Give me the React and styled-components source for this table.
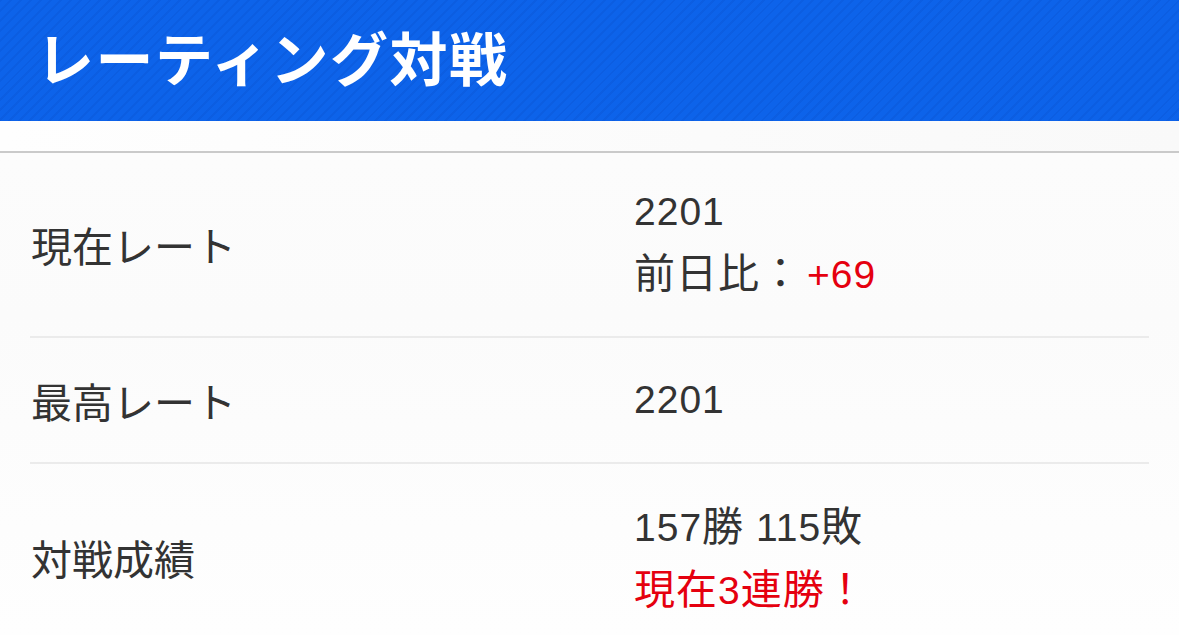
import React from "react";
import styled, { createGlobalStyle } from "styled-components";

const Global = createGlobalStyle`
  html, body { margin: 0; padding: 0; background: #fdfdfd; }
  body { font-family: "Liberation Sans", "Noto Sans CJK JP", sans-serif; color: #333; }
`;

const Page = styled.div`
  width: 1179px;
  height: 635px;
  overflow: hidden;
  background: linear-gradient(180deg, #fdfdfd 0%, #fbfbfb 50%, #fefefe 100%);
`;

const Header = styled.header`
  height: 121px;
  box-sizing: border-box;
  display: flex;
  align-items: center;
  padding: 0 0 9px 36px;
  background-color: #0d63ea;
  background-image: repeating-linear-gradient(
    135deg,
    rgba(0, 40, 140, 0.09) 0px,
    rgba(0, 40, 140, 0.09) 2px,
    rgba(255, 255, 255, 0) 2px,
    rgba(255, 255, 255, 0) 7px
  );
`;

const Title = styled.h1`
  margin: 0;
  font-family: "Noto Sans CJK JP", sans-serif;
  font-weight: 700;
  font-size: 58px;
  line-height: 1;
  color: #fff;
  letter-spacing: 1.5px;
`;

const Gap = styled.div`
  height: 30px;
  background: linear-gradient(90deg, #fefefe 0%, #f9f9f9 100%);
  border-bottom: 2px solid #cacaca;
`;

const Table = styled.div`
  padding: 0 30px;
`;

const Row = styled.div`
  display: grid;
  grid-template-columns: 604px 1fr;
  align-items: center;
  padding: ${(p) => (p.$tall ? "30px" : "33px")} 0 ${(p) => (p.$tall ? "32px" : "33px")};
  border-bottom: 2px solid #ebebeb;
`;

const Label = styled.div`
  font-family: "Noto Sans CJK JP", sans-serif;
  font-size: 41px;
  line-height: 58px;
  color: #333;
  padding-left: 1px;
`;

const Value = styled.div`
  display: flex;
  flex-direction: column;
`;

const Line = styled.div`
  font-family: "Liberation Sans", "Noto Sans CJK JP", sans-serif;
  font-size: 39px;
  line-height: 58px;
  letter-spacing: 1px;
  color: ${(p) => (p.$red ? "#e5000f" : "#333")};
  white-space: nowrap;
`;

const Cjk = styled.span`
  font-family: "Noto Sans CJK JP", sans-serif;
  font-size: 41px;
`;

const Red = styled.span`
  color: #e5000f;
  margin-left: 5px;
`;

export default function App() {
  return (
    <Page>
      <Global />
      <Header>
        <Title>レーティング対戦</Title>
      </Header>
      <Gap />
      <Table>
        <Row $tall>
          <Label>現在レート</Label>
          <Value>
            <Line>2201</Line>
            <Line>
              <Cjk>前日比：</Cjk>
              <Red>+69</Red>
            </Line>
          </Value>
        </Row>
        <Row>
          <Label>最高レート</Label>
          <Value>
            <Line>2201</Line>
          </Value>
        </Row>
        <Row $tall>
          <Label>対戦成績</Label>
          <Value>
            <Line>
              157<Cjk>勝</Cjk> 115<Cjk>敗</Cjk>
            </Line>
            <Line $red>
              <Cjk>現在</Cjk>3<Cjk>連勝！</Cjk>
            </Line>
          </Value>
        </Row>
      </Table>
    </Page>
  );
}
